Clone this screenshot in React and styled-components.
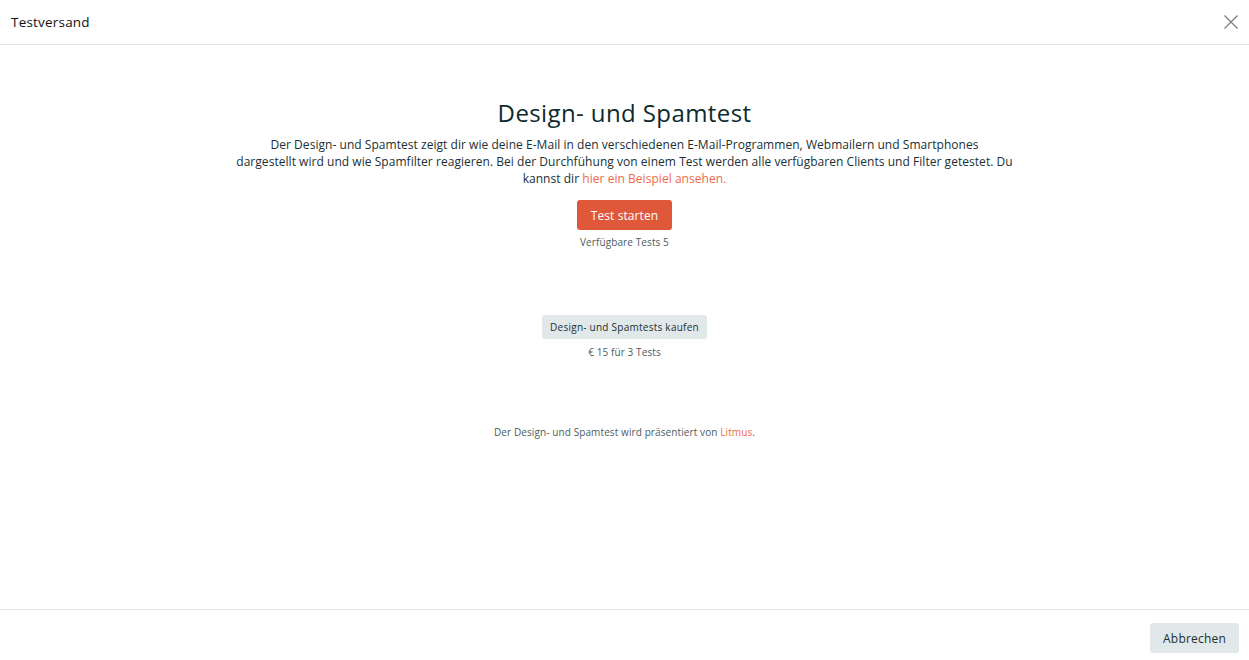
import styled, { createGlobalStyle } from "styled-components";

const GlobalStyle = createGlobalStyle`
  html, body {
    margin: 0;
    padding: 0;
    background: #fff;
  }
  body {
    font-family: "Open Sans", "Liberation Sans", sans-serif;
    color: #0f2a2e;
  }
`;

const Modal = styled.div`
  width: 1249px;
  height: 660px;
  display: flex;
  flex-direction: column;
  background: #fff;
`;

const Header = styled.div`
  height: 45px;
  box-sizing: border-box;
  border-bottom: 1px solid #e3e6e7;
  display: flex;
  align-items: center;
  justify-content: space-between;
  padding: 0 10px 0 11px;
`;

const HeaderTitle = styled.h1`
  margin: 0;
  font-size: 13.5px;
  font-weight: 500;
  color: #111;
  letter-spacing: 0.2px;
`;

const CloseButton = styled.button`
  border: 0;
  background: none;
  padding: 0;
  width: 16px;
  height: 16px;
  display: flex;
  cursor: pointer;
`;

const Body = styled.main`
  flex: 1;
  display: flex;
  flex-direction: column;
  align-items: center;
  padding-top: 52px;
`;

const Title = styled.h2`
  margin: 0;
  font-size: 24px;
  font-weight: 500;
  letter-spacing: 0.4px;
  line-height: 32px;
  color: #0d2a2e;
`;

const Intro = styled.p`
  margin: 7px 0 0;
  text-align: center;
  font-size: 12px;
  letter-spacing: 0.04px;
  line-height: 17px;
  color: #1a3034;
`;

const Link = styled.a`
  color: #f06a4b;
  text-decoration: none;
`;

const Button = styled.button`
  border: 0;
  border-radius: 3px;
  font-family: inherit;
  cursor: pointer;
  background: ${(p) => (p.$primary ? "#e0583a" : "#e1e8e9")};
  color: ${(p) => (p.$primary ? "#fff" : "#1b2f33")};
  font-size: ${(p) => (p.$primary ? "12px" : "10px")};
  letter-spacing: ${(p) => (p.$primary ? "0.1px" : "0.25px")};
  font-weight: 500;
  height: ${(p) => (p.$primary ? "30px" : "24px")};
  padding: ${(p) => (p.$primary ? "0 14px" : "0 8px")};
`;

const Note = styled.div`
  margin-top: ${(p) => p.$top || 0}px;
  font-size: 10px;
  letter-spacing: 0.1px;
  line-height: 14px;
  color: #4d5b5e;
`;

const Block = styled.div`
  margin-top: ${(p) => p.$top}px;
  display: flex;
  flex-direction: column;
  align-items: center;
`;

const Footer = styled.footer`
  height: 51px;
  box-sizing: border-box;
  border-top: 1px solid #e3e6e7;
  display: flex;
  align-items: flex-start;
  justify-content: flex-end;
  padding: 13px 10px 0;
`;

const CancelButton = styled(Button)`
  height: 30px;
  padding: 0 13px;
  font-size: 12px;
  letter-spacing: 0.2px;
`;

export default function App() {
  return (
    <>
      <GlobalStyle />
      <Modal>
        <Header>
          <HeaderTitle>Testversand</HeaderTitle>
          <CloseButton aria-label="Schließen">
            <svg width="16" height="16" viewBox="0 0 16 16">
              <path d="M1.5 1.5 L14.5 14.5 M14.5 1.5 L1.5 14.5" stroke="#7b7f80" strokeWidth="1.3" fill="none" />
            </svg>
          </CloseButton>
        </Header>
        <Body>
          <Title>Design- und Spamtest</Title>
          <Intro>
            Der Design- und Spamtest zeigt dir wie deine E-Mail in den verschiedenen E-Mail-Programmen, Webmailern und Smartphones
            <br />
            dargestellt wird und wie Spamfilter reagieren. Bei der Durchfühung von einem Test werden alle verfügbaren Clients und Filter getestet. Du
            <br />
            kannst dir <Link href="#">hier ein Beispiel ansehen.</Link>
          </Intro>
          <Block $top={13}>
            <Button $primary>Test starten</Button>
            <Note $top={5}>Verfügbare Tests 5</Note>
          </Block>
          <Block $top={66}>
            <Button>Design- und Spamtests kaufen</Button>
            <Note $top={6}>€ 15 für 3 Tests</Note>
          </Block>
          <Note $top={66}>
            Der Design- und Spamtest wird präsentiert von <Link href="#">Litmus</Link>.
          </Note>
        </Body>
        <Footer>
          <CancelButton>Abbrechen</CancelButton>
        </Footer>
      </Modal>
    </>
  );
}
